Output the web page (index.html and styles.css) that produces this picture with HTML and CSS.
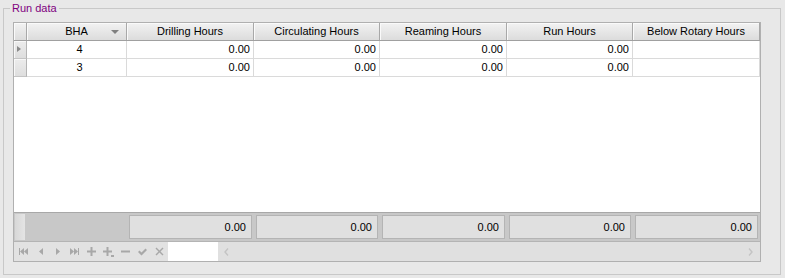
FILE: index.html
```html
<!DOCTYPE html>
<html>
<head>
<meta charset="utf-8">
<link rel="stylesheet" href="styles.css">
</head>
<body>
<div class="group">
  <span class="legend">Run data</span>
  <div class="grid">
    <div class="row head">
      <div class="ind"></div>
      <div class="hc">BHA<span class="sort"></span></div>
      <div class="hc">Drilling Hours</div>
      <div class="hc">Circulating Hours</div>
      <div class="hc">Reaming Hours</div>
      <div class="hc">Run Hours</div>
      <div class="hc last">Below Rotary Hours</div>
    </div>
    <div class="body">
      <div class="row data">
        <div class="ind"><span class="tri"></span></div>
        <div class="c mid">4</div>
        <div class="c">0.00</div>
        <div class="c">0.00</div>
        <div class="c">0.00</div>
        <div class="c">0.00</div>
        <div class="c"></div>
      </div>
      <div class="row data">
        <div class="ind"></div>
        <div class="c mid">3</div>
        <div class="c">0.00</div>
        <div class="c">0.00</div>
        <div class="c">0.00</div>
        <div class="c">0.00</div>
        <div class="c"></div>
      </div>
    </div>
    <div class="row foot">
      <div class="find"><span></span></div>
      <div class="fc"></div>
      <div class="fc"><span class="box">0.00</span></div>
      <div class="fc"><span class="box">0.00</span></div>
      <div class="fc"><span class="box">0.00</span></div>
      <div class="fc"><span class="box">0.00</span></div>
      <div class="fc"><span class="box">0.00</span></div>
    </div>
    <div class="nav">
      <span class="btn"><svg width="9" height="7" viewBox="0 0 9 7"><rect x="0" y="0" width="1" height="7"/><path d="M1 3.5L5 0V7Z M5 3.5L9 0V7Z"/></svg></span>
      <span class="btn"><svg width="4" height="7" viewBox="0 0 4 7"><path d="M0 3.5L4 0V7Z"/></svg></span>
      <span class="btn"><svg width="4" height="7" viewBox="0 0 4 7"><path d="M4 3.5L0 0V7Z"/></svg></span>
      <span class="btn"><svg width="9" height="7" viewBox="0 0 9 7"><path d="M0 0L4 3.5L0 7Z M4 0L8 3.5L4 7Z"/><rect x="8" y="0" width="1" height="7"/></svg></span>
      <span class="btn"><svg width="9" height="9" viewBox="0 0 9 9"><rect x="0" y="3.5" width="9" height="2"/><rect x="3.5" y="0" width="2" height="9"/></svg></span>
      <span class="btn"><svg width="11" height="10" viewBox="0 0 11 10"><rect x="0" y="3.5" width="9" height="2"/><rect x="3.5" y="0" width="2" height="9"/><rect x="8" y="8" width="3" height="2"/></svg></span>
      <span class="btn"><svg width="9" height="9" viewBox="0 0 9 9"><rect x="0" y="3.5" width="9" height="2"/></svg></span>
      <span class="btn"><svg width="9" height="8" viewBox="0 0 9 8"><path d="M0 4L1.5 2.5L3.5 4.5L7.5 0.5L9 2L3.5 7.5Z"/></svg></span>
      <span class="btn"><svg width="9" height="9" viewBox="0 0 9 9"><path d="M0.5 1.5L1.5 0.5L4.5 3.5L7.5 0.5L8.5 1.5L5.5 4.5L8.5 7.5L7.5 8.5L4.5 5.5L1.5 8.5L0.5 7.5L3.5 4.5Z"/></svg></span>
      <span class="navbox"></span>
      <div class="hscroll">
        <svg width="5" height="8" viewBox="0 0 5 8"><path d="M4 0.5L1 4L4 7.5" fill="none" stroke="#c4c4c4" stroke-width="1.4"/></svg>
        <svg width="5" height="8" viewBox="0 0 5 8"><path d="M1 0.5L4 4L1 7.5" fill="none" stroke="#c4c4c4" stroke-width="1.4"/></svg>
      </div>
    </div>
  </div>
</div>
</body>
</html>
```
FILE: styles.css
```css
html, body {
  margin: 0;
  padding: 0;
  background: #e8e8e8;
  font-family: "Liberation Sans", Arial, sans-serif;
  font-size: 11px;
  color: #000;
}
body {
  width: 785px;
  height: 278px;
  overflow: hidden;
}
.group {
  position: relative;
  margin: 8px 0 0 3px;
  width: 778px;
  height: 267px;
  box-sizing: border-box;
  border: 1px solid #c8c8c8;
  padding: 13px 0 0 9px;
}
.legend {
  position: absolute;
  top: -8px;
  left: 6px;
  padding: 0 2px;
  background: #e8e8e8;
  color: #800080;
  line-height: 14px;
  font-size: 11px;
}
.grid {
  width: 748px;
  border: 1px solid #b0b0b0;
  box-sizing: border-box;
  display: flex;
  flex-direction: column;
}
.row {
  display: grid;
  grid-template-columns: 13px 100px 127px 126px 127px 126px 127px;
}
.head {
  height: 18px;
  box-sizing: border-box;
  border-bottom: 1px solid #a0a0a0;
}
.head .ind, .hc {
  background: linear-gradient(#f2f2f2, #dcdcdc);
  border-right: 1px solid #a8a8a8;
  box-shadow: inset 1px 1px 0 #fafafa;
}
.hc {
  position: relative;
  display: flex;
  align-items: center;
  justify-content: center;
  line-height: 17px;
  white-space: nowrap;
}
.hc.last { border-right: 1px solid #a8a8a8; }
.sort {
  position: absolute;
  right: 7px;
  top: 7px;
  width: 0;
  height: 0;
  border-left: 4px solid transparent;
  border-right: 4px solid transparent;
  border-top: 4px solid #808080;
}
.body {
  height: 171px;
  background: #fff;
}
.data { height: 18px; }
.data .ind {
  background: linear-gradient(#ececec, #dedede);
  border-right: 1px solid #b4b4b4;
  border-bottom: 1px solid #c4c4c4;
  box-shadow: inset 1px 1px 0 #f8f8f8;
  position: relative;
}
.tri {
  position: absolute;
  left: 3px;
  top: 5px;
  width: 0;
  height: 0;
  border-top: 3.5px solid transparent;
  border-bottom: 3.5px solid transparent;
  border-left: 4px solid #8a8a8a;
}
.c {
  border-right: 1px solid #dadada;
  border-bottom: 1px solid #dadada;
  text-align: right;
  padding-right: 3px;
  line-height: 17px;
}
.c.mid {
  text-align: center;
  padding-right: 0;
  padding-left: 6px;
}
.foot {
  height: 29px;
  box-sizing: border-box;
  border-top: 1px solid #a8a8a8;
  background: #c8c8c8;
}
.find {
  padding: 1px 0 1px 1px;
}
.find span {
  display: block;
  height: 100%;
  width: 10px;
  background: linear-gradient(90deg, #d8d8d8, #e4e4e4);
}
.fc {
  display: flex;
  padding: 2px 2px 2px 2px;
}
.box {
  flex: 1;
  border: 1px solid #b4b4b4;
  background: #e0e0e0;
  text-align: right;
  padding-right: 5px;
  line-height: 22px;
}
.nav {
  display: flex;
  align-items: stretch;
  height: 20px;
  box-sizing: border-box;
  border-top: 1px solid #b4b4b4;
  background: #e2e2e2;
}
.btn {
  width: 17px;
  display: flex;
  align-items: center;
  justify-content: center;
}
.btn:first-child { margin-left: 1px; }
.btn svg { fill: #a8a8a8; }
.navbox {
  width: 50px;
  background: #fff;
}
.hscroll {
  flex: 1;
  display: flex;
  align-items: center;
  justify-content: space-between;
  padding: 0 7px 0 6px;
  background: #e0e0e0;
}
```
